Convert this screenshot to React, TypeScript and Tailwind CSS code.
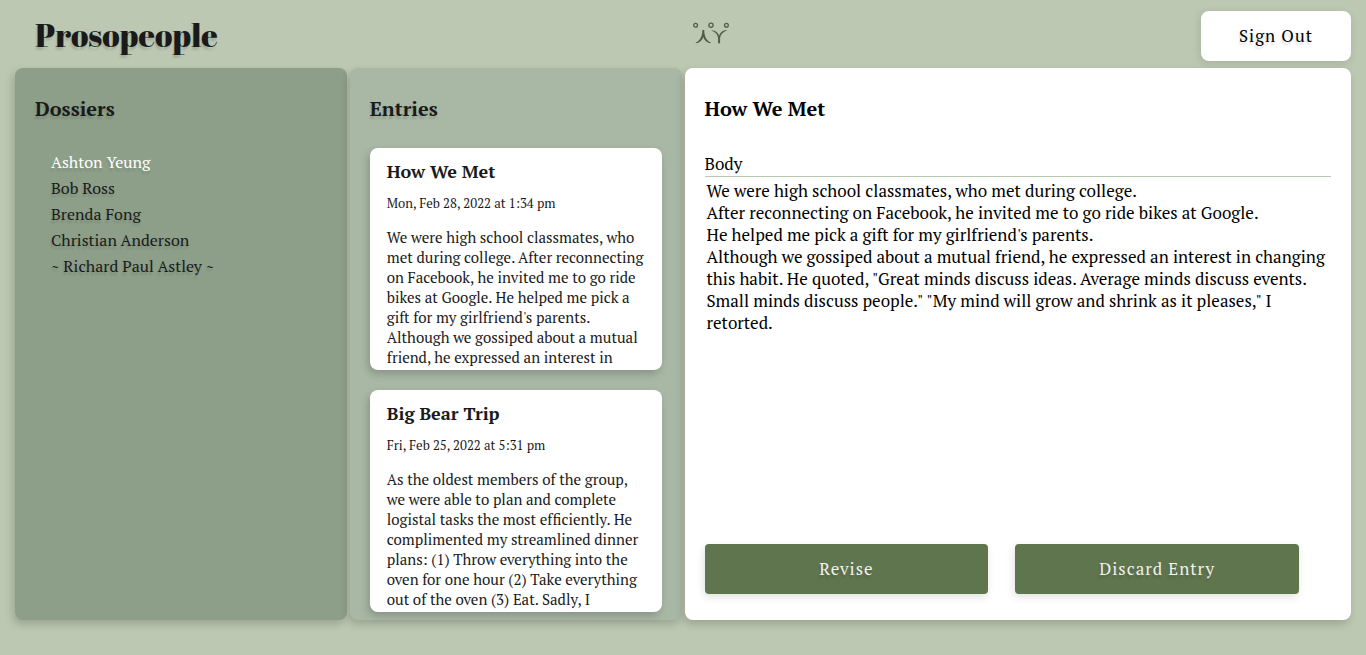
const dossiers = [
  'Ashton Yeung',
  'Bob Ross',
  'Brenda Fong',
  'Christian Anderson',
  '~ Richard Paul Astley ~',
];

const metBody = [
  'We were high school classmates, who met during college.',
  'After reconnecting on Facebook, he invited me to go ride bikes at Google.',
  "He helped me pick a gift for my girlfriend's parents.",
  'Although we gossiped about a mutual friend, he expressed an interest in changing this habit. He quoted, "Great minds discuss ideas. Average minds discuss events. Small minds discuss people." "My mind will grow and shrink as it pleases," I retorted.',
];

const entries = [
  {
    title: 'How We Met',
    date: 'Mon, Feb 28, 2022 at 1:34 pm',
    text: "We were high school classmates, who met during college. After reconnecting on Facebook, he invited me to go ride bikes at Google. He helped me pick a gift for my girlfriend's parents. Although we gossiped about a mutual friend, he expressed an interest in",
  },
  {
    title: 'Big Bear Trip',
    date: 'Fri, Feb 25, 2022 at 5:31 pm',
    text: 'As the oldest members of the group, we were able to plan and complete logistal tasks the most efficiently. He complimented my streamlined dinner plans: (1) Throw everything into the oven for one hour (2) Take everything out of the oven (3) Eat. Sadly, I',
  },
];

function Logo() {
  return (
    <svg width="36" height="24" viewBox="0 0 36 24" fill="none" stroke="#4f5c49" aria-hidden="true">
      <g strokeWidth="1.3">
        <circle cx="2.6" cy="3.3" r="1.9" />
        <circle cx="18" cy="3.3" r="2.1" />
        <circle cx="33.4" cy="3.3" r="1.9" />
      </g>
      <g fill="#4f5c49" stroke="none">
        <path d="M9.300 8h2c-.2 5 1.700 10.500 6.500 12.600v.6c-4.300-.4-6.700-3.200-7.500-6.400-.8 3.200-3.200 6-7.500 6.400v-.6C7.600 18.500 9.500 13 9.300 8z" />
        <path d="M18.600 8.200c3.900.2 6.600 2.600 7.500 5.600 1-3.200 3.600-5.500 7.500-5.800v.7c-4 1.300-6.300 4.300-6.500 8v4.500h-2v-4.500c-.2-3.700-2.500-6.700-6.500-7.900z" />
      </g>
    </svg>
  );
}

const panelShadow = 'shadow-[-2px_4px_8px_rgba(0,0,0,0.18)]';
const textShadow = '[text-shadow:-1px_3px_2px_rgba(0,0,0,0.12)]';

export default function App() {
  return (
    <div className="flex h-screen min-h-[500px] flex-col bg-[#bcc8b2] px-[15px] pb-[35px] font-['PT_Serif','Liberation_Serif',serif] text-[#1a1a1a]">
      <header className="flex h-[68px] shrink-0 items-start justify-between">
        <h1 className={`pt-4 pl-5 font-['Abril_Fatface','Liberation_Serif',serif] text-[32px] leading-[38px] font-normal ${textShadow}`}>
          Prosopeople
        </h1>
        <div className="pt-[22px] pl-1">
          <Logo />
        </div>
        <button
          type="button"
          className={`mt-[11px] h-[50px] w-[150px] rounded-lg bg-white text-[17px] tracking-[1px] text-black shadow-[-1px_2px_8px_rgba(0,0,0,0.12)] ${textShadow}`}
        >
          Sign Out
        </button>
      </header>

      <main className="grid min-h-0 flex-1 grid-cols-4 grid-rows-1 gap-[3px]">
        <section className={`rounded-lg bg-[#8d9f89] p-5 ${panelShadow}`}>
          <h2 className={`text-xl leading-[42px] font-bold ${textShadow}`}>Dossiers</h2>
          <ul className={`pt-[19px] pl-4 text-base leading-[26px] ${textShadow}`}>
            {dossiers.map((name, i) => (
              <li key={name}>
                <a href="#dossier" className={i === 0 ? 'text-white' : undefined}>
                  {name}
                </a>
              </li>
            ))}
          </ul>
        </section>

        <section className={`flex flex-col rounded-lg bg-[#a9b8a5] px-5 pt-5 ${panelShadow}`}>
          <h2 className={`text-xl leading-[42px] font-bold ${textShadow}`}>Entries</h2>
          <div className="flex flex-col gap-5 pt-[18px]">
            {entries.map((entry) => (
              <article
                key={entry.title}
                className="min-h-[222px] rounded-lg bg-white px-[17px] pt-[11px] shadow-[-2px_4px_8px_rgba(0,0,0,0.2)]"
              >
                <h3 className="text-lg leading-6 font-bold">{entry.title}</h3>
                <p className="pt-2 text-[13px] leading-6">{entry.date}</p>
                <p className="pt-3 text-[15px] leading-5">{entry.text}</p>
              </article>
            ))}
          </div>
        </section>

        <section className={`col-span-2 flex flex-col rounded-lg bg-white px-5 pt-5 pb-[26px] text-black ${panelShadow}`}>
          <h2 className="text-xl leading-[42px] font-bold">How We Met</h2>
          <label htmlFor="entry-body" className="mt-[22px] border-b border-[#bcc8b2] text-[17px] leading-6">
            Body
          </label>
          <textarea
            id="entry-body"
            readOnly
            defaultValue={metBody.join('\n')}
            className="min-h-0 flex-1 resize-none overflow-hidden p-[2px] pt-[3px] text-[17px] leading-[22px] outline-none"
          />
          <div className="grid grid-cols-2 gap-[27px] pr-8">
            {['Revise', 'Discard Entry'].map((label) => (
              <button
                key={label}
                type="button"
                className={`h-[50px] rounded-sm bg-[#5f754d] text-[17px] tracking-[1px] text-[#f0f0f0] shadow-[-1px_3px_8px_rgba(0,0,0,0.12)] ${textShadow}`}
              >
                {label}
              </button>
            ))}
          </div>
        </section>
      </main>
    </div>
  );
}
